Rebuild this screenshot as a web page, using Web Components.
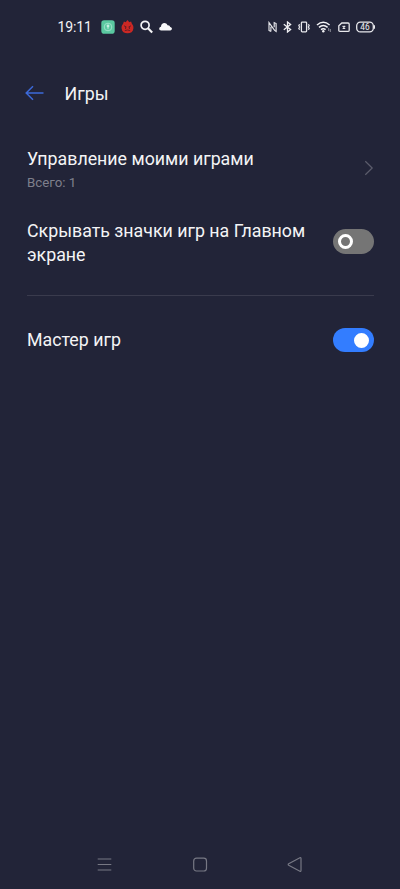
<!DOCTYPE html>
<html lang="ru"><head><meta charset="utf-8"><title>Игры</title>
<style>
html,body{margin:0;height:100%;background:#222438}
body{font-family:Roboto,"Noto Sans",sans-serif;color:#f4f4f6;overflow:hidden}
</style></head><body>
<settings-screen></settings-screen>
<script>
const define = (name, html) => customElements.define(name, class extends HTMLElement {
  constructor() { super(); this.attachShadow({mode: 'open'}).innerHTML = html; }
});

define('status-bar', `<style>
:host{display:flex;box-sizing:border-box;height:54px;padding:0 25px 0 57.5px;align-items:center;justify-content:space-between}
div{display:flex;align-items:center}
svg{display:block}
.time{font-size:14px;line-height:16px;letter-spacing:-.1px;width:43.5px;white-space:nowrap}
.left{gap:6px}.time{margin-right:-6px}
.right{gap:6px}
</style>
<div class="left"><span class="time">19:11</span>
<svg width="14" height="14" viewBox="0 0 14 14"><rect x=".3" y=".3" width="13.4" height="13.4" rx="2.8" fill="#5ac8a0"/><circle cx="7" cy="7" r="3.8" fill="none" stroke="#a5e3ce" stroke-width=".9"/><path d="M7 9.2V6.2" stroke="#b5e8d7"/><circle cx="7" cy="6" r="1.4" fill="#c5efe0"/></svg>
<svg width="13" height="14" viewBox="0 0 13 14"><path d="M2 4 2.9 1.6 4.7 2.2 6.5.1 8.3 2.2 10.1 1.6 11 4C12.3 5 12.6 6.8 12.4 8.5 12 11.8 9.8 13.3 6.5 13.3S1 11.8.6 8.5C.4 6.8.7 5 2 4Z" fill="#cb2824"/><path d="M3 5.8 5.5 7M10 5.8 7.5 7M4.6 7V9M8.4 7V9M3.8 10.6Q6.5 9.4 9.2 10.6" fill="none" stroke="#6b1d25" stroke-width="1"/></svg>
<svg width="13" height="14" viewBox="0 0 13 14"><circle cx="5.1" cy="5.3" r="4" fill="none" stroke="#f4f4f6" stroke-width="1.7"/><path d="m8 8.3 4.2 4.3" stroke="#f4f4f6" stroke-width="2.1"/></svg>
<svg width="13" height="14" viewBox="0 0 13 14"><path d="M2.2 10.4C-.4 10.4-.4 7.2 2 6.8 2 2.4 7.3 2 8.5 5.2 10.2 5 11 6 11.2 7 13.6 7.3 13.5 10.4 11.2 10.4Z" fill="#f8f8fa"/></svg></div>
<div class="right">
<svg width="9" height="12" viewBox="0 0 9 12" fill="none" stroke="#e8e8ec" stroke-width="1.15"><path d="M2.9 10.4 1 9.5V1.6L6.6 9.4 8.1 10.4V2.5L6.2 1.6V6.2M2.9 10.4V5.8"/></svg>
<svg width="9" height="12" viewBox="0 0 9 12" fill="none" stroke="#f0f0f3" stroke-width="1.3"><path d="M.8 3.2 7.6 8.6 4.5 11V1L7.6 3.4.8 8.8"/></svg>
<svg width="12" height="12" viewBox="0 0 12 12" fill="none" stroke="#e8e8ec" stroke-width="1.3"><rect x="3.4" y="1.1" width="5.2" height="9.8" rx=".8"/><path d="M1.6 3.2.8 4.6 1.6 6 .8 7.4 1.6 8.8M10.4 3.2l.8 1.4-.8 1.4.8 1.4-.8 1.4" stroke-width="1.2"/></svg>
<svg width="16" height="12" viewBox="0 0 16 12" fill="none" stroke="#f4f4f6" stroke-width="1.5"><path d="M1 4Q7.3-1.4 13.6 4M3 6.4Q7.3 2.7 11.6 6.4M5 8.7Q7.3 6.9 9.6 8.7"/><circle cx="7.3" cy="10.3" r="1.2" fill="#f4f4f6" stroke="none"/><path d="M12.7 7v3M14.3 8v3" stroke="#a7a8b1" stroke-width=".8"/></svg>
<svg width="12" height="12" viewBox="0 0 12 12" fill="none" stroke="#e8e8ec" stroke-width="1.3"><path d="M3.8 2H10Q11.2 2 11.2 3.2V9.2Q11.2 10.4 10 10.4H2Q.8 10.4.8 9.2V4.8Z"/><path d="m4.6 4.9 2.6 2.6M7.2 4.9 4.6 7.5"/></svg>
<svg width="19" height="12" viewBox="0 0 19 12"><rect x=".7" y="1.1" width="16.6" height="9.8" rx="3.6" fill="none" stroke="#e8e8ec" stroke-width="1.3"/><path d="M18.4 4.3v3.4" stroke="#e8e8ec" stroke-width="1.2"/><text x="9" y="9" text-anchor="middle" font-family="Roboto" font-size="8.3" fill="#f0f0f3">46</text></svg>
</div>`);

define('page-header', `<style>
:host{display:flex;box-sizing:border-box;height:78px;padding-left:25px;align-items:center;gap:19.5px;font-size:17.8px;line-height:24px}
svg{display:block}
span{padding-top:2px}
</style><svg width="20" height="16" viewBox="0 0 20 16" fill="none" stroke="#3c69d8" stroke-width="1.5"><path d="M18.5 8H1.2M8 1.2 1.2 8 8 14.8"/></svg><span><slot></slot></span>`);

define('settings-row', `<style>
:host{display:flex;justify-content:space-between;align-items:center;box-sizing:border-box;padding:0 26.5px 0 27px}
.label{font-size:17.8px;line-height:24px;width:290px;padding-top:var(--label-drop,0px)}
::slotted([slot=note]){display:block;font-size:13.3px;line-height:24px;color:#7e7f8c}
</style><div class="label"><slot></slot><slot name="note"></slot></div><slot name="control"></slot>`);

define('chevron-icon', `<style>:host,svg{display:block}:host{margin-top:-1px}</style><svg width="10" height="16" viewBox="0 0 10 16" fill="none" stroke="#5c5d6c" stroke-width="1.2"><path d="m1.3 1.2 6.9 6.8-6.9 6.8"/></svg>`);

define('toggle-switch', `<style>
:host{display:flex;box-sizing:border-box;width:40.5px;height:24.5px;border-radius:13px;background:#757575;align-items:center;padding:0 4.8px}
i{display:block;box-sizing:border-box;width:15px;height:15px;border:3.2px solid #fff;border-radius:50%}
:host([on]){background:#337dff;justify-content:flex-end}
:host([on]) i{background:#fff}
</style><i></i>`);

define('nav-bar', `<style>
:host{display:flex;box-sizing:border-box;height:49px;padding:0 97px;align-items:center;justify-content:space-between}
svg{display:block}
</style>
<svg width="15" height="16" viewBox="0 0 15 16" stroke="#777884" stroke-width="1.15"><path d="M.7 2H14.3M.7 7.5H14.3M.7 13H14.3"/></svg>
<svg width="16" height="16" viewBox="0 0 16 16" fill="none" stroke="#777884" stroke-width="1.2"><rect x="1.7" y="1.2" width="12.8" height="12.8" rx="2.8"/></svg>
<svg width="16" height="16" viewBox="0 0 16 16" fill="none" stroke="#777884" stroke-width="1.2"><path d="M12.9.7Q14 .3 14 1.5V13.5Q14 14.7 12.9 14.2L1.7 8.3Q.7 7.5 1.7 6.7Z"/></svg>`);

define('settings-screen', `<style>
:host{display:flex;flex-direction:column;height:889px;width:400px}
main{flex:1}
.manage{height:73px;--label-drop:5px}
.hide{height:73px;--label-drop:3.5px}
hr{border:0;height:1px;background:#3a3b4d;margin:17px 26.5px 0 27px}
.master{height:88px}
</style>
<status-bar></status-bar>
<page-header>Игры</page-header>
<main>
<settings-row class="manage">Управление моими играми<span slot="note">Всего: 1</span><chevron-icon slot="control"></chevron-icon></settings-row>
<settings-row class="hide">Скрывать значки игр на Главном экране<toggle-switch slot="control"></toggle-switch></settings-row>
<hr>
<settings-row class="master">Мастер игр<toggle-switch slot="control" on></toggle-switch></settings-row>
</main>
<nav-bar></nav-bar>`);
</script></body></html>
